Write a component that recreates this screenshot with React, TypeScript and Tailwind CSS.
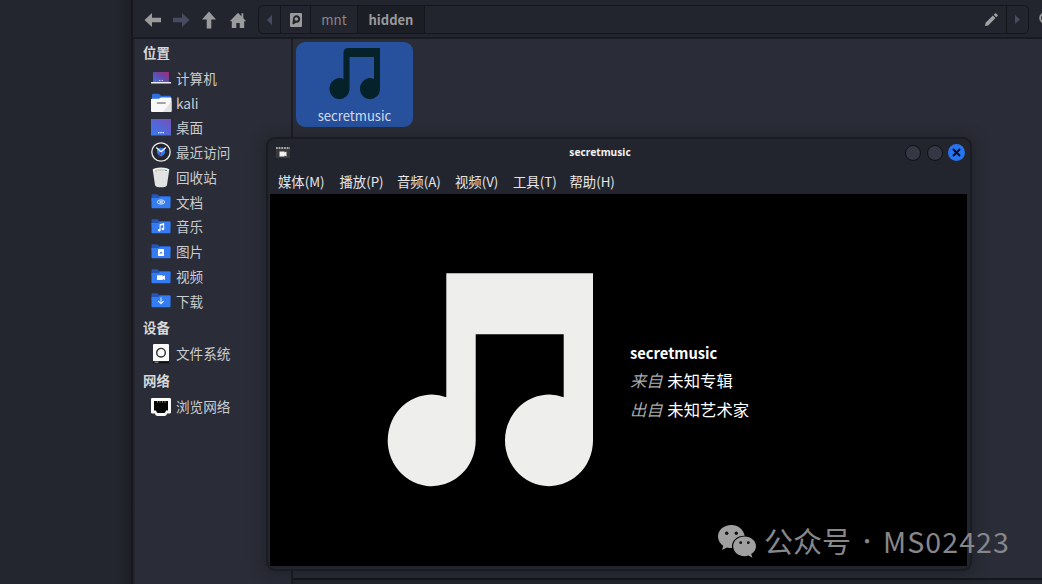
import type { ReactNode } from "react";

const folderGlyphs: Record<string, ReactNode> = {
  docs: (
    <g fill="none" stroke="#dbe7ff" strokeWidth="1">
      <ellipse cx="10" cy="9" rx="3.7" ry="2.1" />
      <ellipse cx="10.3" cy="9" rx="1.7" ry="0.8" />
    </g>
  ),
  music: (
    <path d="M8.6 6.2 13.2 5v6a1.4 1.2 0 1 1-1-1.1V7.1l-2.6.7v4.4a1.4 1.2 0 1 1-1-1.1z" fill="#fff" />
  ),
  pictures: (
    <>
      <rect x="7" y="6" width="6" height="7" rx="0.6" fill="#fff" />
      <path d="M8.3 10.6 10 8.6l1.7 2z" fill="#3579ef" />
    </>
  ),
  videos: <path d="M6 7.3h5.7v1.2L14 7.3v4.8l-2.3-1.2v1.2H6z" fill="#fff" />,
  downloads: (
    <path d="M10 5.5v6M7.3 9 10 11.7 12.7 9" fill="none" stroke="#dbe7ff" strokeWidth="1.1" />
  ),
};

const FolderIcon = ({ name }: { name: string }) => (
  <svg width="20" height="17" viewBox="0 0 20 17">
    <path d="M.5 2q0-.8.8-.8h5l2 1.8h10.2q1 0 1 1v4H.5z" fill="#2456b4" />
    <path d="M.5 5h7l1.5-1.2h10.5v10.4q0 1-1 1h-17q-1 0-1-1z" fill="#357cf2" />
    {folderGlyphs[name]}
  </svg>
);

const ComputerIcon = () => (
  <svg width="20" height="18" viewBox="0 0 20 18">
    <defs>
      <linearGradient id="laptop" x1="0" y1="1" x2="1" y2="0">
        <stop stopColor="#3974e8" />
        <stop offset=".55" stopColor="#6846a8" />
        <stop offset="1" stopColor="#a12b72" />
      </linearGradient>
    </defs>
    <path d="M2 3h16v10H2z" fill="url(#laptop)" />
    <path d="M8 11.5h1.3M10.6 11.5h1.3" stroke="#d6d3ee" />
    <path d="M0 13h20v1.5H0z" fill="#f0f0f0" />
  </svg>
);

const HomeFolderIcon = () => (
  <svg width="21" height="20" viewBox="0 0 21 20">
    <path d="M1 2q0-1.2 1-1.2h6l2 2h9q1 0 1 1V8H1z" fill="#2d6fe0" />
    <path d="M0 6.5q0-.7.8-.7h7L10 4.6h9.7q.8 0 .8.8V18q0 1-.8 1H1q-1 0-1-1z" fill="#f8f8f8" />
    <path d="M20.5 8v10q0 1-.8 1H12z" fill="#e2e2e2" />
    <path d="M6.5 10h7.5" stroke="#a3a3a3" strokeWidth="1.8" strokeLinecap="round" />
  </svg>
);

const DesktopIcon = () => (
  <svg width="20" height="17" viewBox="0 0 20 17">
    <defs>
      <linearGradient id="desk" x1="0" y1="1" x2="1" y2="0">
        <stop stopColor="#367af2" />
        <stop offset="1" stopColor="#7650b8" />
      </linearGradient>
    </defs>
    <path d="M0 0h20v16.5H0z" fill="url(#desk)" />
    <path d="M7 13.6h1.5M9.3 13.6h1.5M11.5 13.6H13" stroke="#dfe6ff" strokeWidth="1.2" />
  </svg>
);

const RecentIcon = () => (
  <svg width="20" height="20" viewBox="0 0 20 20">
    <circle cx="10" cy="10" r="9.2" fill="#23252e" stroke="#ededed" strokeWidth="1.3" />
    <path d="M10 5.5 14 6.7v4Q13 13.6 10 14.5 7 13.6 6 10.7v-4z" fill="#3478f4" />
    <path d="M5.3 5.5 10 9.8l4.8-4.3" fill="none" stroke="#f3f3f3" strokeWidth="1.4" />
    <path d="M10 10 7.5 15.5" stroke="#842d46" />
  </svg>
);

const TrashIcon = () => (
  <svg width="20" height="21" viewBox="0 0 20 21">
    <path d="M1.7 2.5 4 18q.3 2.3 6 2.3t6-2.3l2.3-15.5z" fill="#e3e3e3" />
    <ellipse cx="10" cy="2.8" rx="8.2" ry="2.3" fill="#f4f4f4" />
    <path d="M4 3q6-2.5 12 0-6 3-12 0z" fill="#cfd2cd" />
    <path d="M4 4h2" stroke="#dba244" strokeWidth="1.2" />
    <path d="M14 3.5h2" stroke="#45a198" strokeWidth="1.2" />
  </svg>
);

const DiskIcon = () => (
  <svg width="20" height="21" viewBox="0 0 20 21">
    <rect x="2" y="1" width="16" height="17.5" rx="1" fill="#fafafa" />
    <circle cx="10" cy="9.7" r="4.3" fill="#fafafa" stroke="#2c2c2c" strokeWidth="1.4" />
    <path d="M2 18.2h16v2H2z" fill="#0b0b0d" />
    <path d="M3.5 19.2h4" stroke="#a8a8a8" />
  </svg>
);

const NetworkIcon = () => (
  <svg width="20" height="20" viewBox="0 0 20 20">
    <path d="M1.2 1h17.6q1.2 0 1.2 1.2v13.3q0 1-1.2 1h-2.6q-.7 2.2-2.3 2.5H6.1q-1.6-.3-2.3-2.5H1.2q-1.2 0-1.2-1V2.2Q0 1 1.2 1z" fill="#fbfbfb" />
    <path d="M3 4h14v9.5h-2q-.5 2.5-2 2.5H7q-1.5 0-2-2.5H3z" fill="#050505" />
    <path d="M6.5 4v1.7M9 4v1.7M11.5 4v1.7M14 4v1.7" stroke="#95804d" strokeWidth=".9" />
  </svg>
);

const places = [
  { label: "计算机", icon: <ComputerIcon /> },
  { label: "kali", icon: <HomeFolderIcon /> },
  { label: "桌面", icon: <DesktopIcon /> },
  { label: "最近访问", icon: <RecentIcon /> },
  { label: "回收站", icon: <TrashIcon /> },
  { label: "文档", icon: <FolderIcon name="docs" /> },
  { label: "音乐", icon: <FolderIcon name="music" /> },
  { label: "图片", icon: <FolderIcon name="pictures" /> },
  { label: "视频", icon: <FolderIcon name="videos" /> },
  { label: "下载", icon: <FolderIcon name="downloads" /> },
];

const menus = [
  { label: "媒体(M)", width: "w-[61.5px]" },
  { label: "播放(P)", width: "w-[57.5px]" },
  { label: "音频(A)", width: "w-[58px]" },
  { label: "视频(V)", width: "w-[58px]" },
  { label: "工具(T)", width: "w-[56.5px]" },
  { label: "帮助(H)", width: "w-[60px]" },
];

const SectionTitle = ({ children }: { children: ReactNode }) => (
  <h2 className="flex h-[26.8px] items-center pl-[8px] text-[13.4px] font-bold text-[#d8d8da]">{children}</h2>
);

const PlaceRow = ({ label, icon, tall }: { label: string; icon: ReactNode; tall?: boolean }) => (
  <div className={tall ? "flex h-[26.5px] items-center pl-[16px]" : "flex h-[24.75px] items-center pl-[16px]"}>
    <span className="flex w-[25px] shrink-0 items-center">{icon}</span>
    <span className="text-[13.6px] text-[#cbccd0]">{label}</span>
  </div>
);

const Toolbar = () => (
  <header className="flex h-[39px] shrink-0 items-center border-b-2 border-[#191b22] bg-[#23252e] pt-[2px]">
    <div className="flex w-[125px] shrink-0 items-center gap-[8px] pl-[10px]">
      <svg width="20" height="20" viewBox="0 0 20 20">
        <path d="M1.5 10 9 3v4.7h9v4.6H9V17z" fill="#9a9b9d" />
      </svg>
      <svg width="20" height="20" viewBox="0 0 20 20">
        <path d="M18.5 10 11 3v4.7H2v4.6h9V17z" fill="#474b60" />
      </svg>
      <svg width="20" height="20" viewBox="0 0 20 20">
        <path d="M10 1.5 3 9.5h4.7v9h4.6v-9H17z" fill="#9a9b9d" />
      </svg>
      <svg className="ml-px" width="20" height="20" viewBox="0 0 20 20">
        <path d="M1.8 11.3 10 2.8l3.5 3.7V3.3h1.8v5l2.900 3h-2V18h-4.500v-5H8.300v5H3.800v-6.700z" fill="#9a9b9d" />
      </svg>
    </div>
    <div className="flex h-[29px] w-[771px] shrink-0 overflow-hidden rounded-[5px] border border-[#14161b] bg-[#23252e] text-[13.33px]">
      <div className="flex w-[22px] items-center justify-center border-r border-[#14161b]">
        <svg width="5" height="10" viewBox="0 0 5 10"><path d="M5 0v10L0 5z" fill="#474b60" /></svg>
      </div>
      <div className="flex w-[30px] items-center justify-center border-r border-[#14161b]">
        <svg width="12" height="14" viewBox="0 0 12 14">
          <rect width="12" height="14" rx="1" fill="#9a9b9d" />
          <path d="M2.3 10.5 3 7A3.7 3.7 0 1 1 6 9.7L3.5 11.5z" fill="#23252e" />
          <circle cx="6.4" cy="6" r="1.8" fill="#9a9b9d" />
        </svg>
      </div>
      <div className="flex w-[47px] items-center justify-center border-r border-[#14161b] text-[#86878b]">mnt</div>
      <div className="flex w-[67px] items-center justify-center border-r border-[#14161b] bg-[#1c1e25] text-[13px] font-bold text-[#999a9d]">hidden</div>
      <div className="flex flex-1 items-center justify-end pr-[8px]">
        <svg width="14" height="14" viewBox="0 0 14 14">
          <path d="m1 13 .6-3.2 7.3-7.3 2.6 2.6-7.3 7.3zM9.7 1.7 11 .5q.6-.5 1.2 0l1.3 1.3q.5.6 0 1.2l-1.2 1.3z" fill="#a0a1a2" />
        </svg>
      </div>
      <div className="flex w-[22px] items-center justify-center border-l border-[#14161b]">
        <svg width="5" height="9" viewBox="0 0 5 9"><path d="M0 0v9l5-4.5z" fill="#474b60" /></svg>
      </div>
    </div>
    <svg className="ml-[9px] shrink-0" width="20" height="20" viewBox="0 0 20 20">
      <circle cx="7" cy="8" r="4.8" fill="none" stroke="#9a9b9d" strokeWidth="2" />
      <path d="m11 12 6 6" stroke="#9a9b9d" strokeWidth="2" />
    </svg>
  </header>
);

const PlayerWindow = () => (
  <section className="absolute left-[266px] top-[137px] flex h-[434px] w-[706px] flex-col rounded-[9px] border-2 border-[#1a1c22] bg-[#23252e] px-[2px] shadow-[0_2px_16px_4px_rgba(0,0,0,0.2)]">
    <div className="flex h-[27px] shrink-0 items-center">
      <div className="w-[52px] pl-[6px]">
        <svg width="14" height="12" viewBox="0 0 14 12">
          <rect width="14" height="11" fill="#393939" />
          <path d="M0 1h14" stroke="#d0d0d0" strokeWidth="1.5" strokeDasharray="1.7 1" />
          <path d="M3.5 4.5h5v1l2-1v5l-2-1v1h-5z" fill="#f2f2f2" />
        </svg>
      </div>
      <h1 className="flex-1 pr-[27px] pt-px text-center font-['Noto_Sans',sans-serif] text-[10.2px] font-bold text-[#f0f0f0]">secretmusic</h1>
      <div className="flex w-[63px] items-center gap-[6px]">
        <span className="h-4 w-4 rounded-full border border-[#101116] bg-[#353844]" />
        <span className="h-4 w-4 rounded-full border border-[#101116] bg-[#353844]" />
        <span className="-ml-px flex h-[17px] w-[17px] items-center justify-center rounded-full bg-[#2874f0]">
          <svg width="9" height="9" viewBox="0 0 9 9"><path d="m1 1 7 7M8 1 1 8" stroke="#080c16" strokeWidth="2" /></svg>
        </span>
      </div>
    </div>
    <nav className="flex h-[28px] shrink-0 items-center pl-[8px] pt-[3px] text-[13.33px] text-[#e6e6e6]">
      {menus.map((menu) => (
        <span key={menu.label} className={menu.width}>{menu.label}</span>
      ))}
    </nav>
    <div className="mb-[3px] mr-[1px] flex flex-1 items-start bg-black">
      <svg className="ml-[117px] mt-[78px] shrink-0" width="207" height="215" viewBox="0 0 207 215">
        <path d="M59.3 1.3H206V168.5a44 45.8 0 1 1-29.3-43.3V62.3H88.7V168.5a44 45.8 0 1 1-29.4-43.3z" fill="#eeeeec" />
      </svg>
      <div className="ml-[36px] mt-[145px] text-[16.35px] leading-[28.3px] text-white">
        <p className="text-[14.7px] font-bold">secretmusic</p>
        <p className="-mt-px"><i className="mr-px text-[#aaa]">来自</i> 未知专辑</p>
        <p><i className="mr-px text-[#aaa]">出自</i> 未知艺术家</p>
      </div>
    </div>
  </section>
);

const Watermark = () => (
  <div className="absolute left-[717px] top-[519px] flex h-[44px] items-center text-[#87878a]">
    <svg width="40" height="34" viewBox="0 0 40 34">
      <path d="M14.5 1C6.7 1 1 6 1 12.6c0 3.8 2 7.1 5.3 9.3L5 25.9l5-2.5c1.5.5 3 .7 5 .7C14 16 21 11.4 27.7 11.7 26.5 5.6 21.2 1 14.5 1z" fill="#a0a0a0" />
      <path d="M27.5 12.5c-6.6 0-11.3 4.5-11.3 9.8s4.7 9.9 11.3 9.9c1.4 0 2.7-.2 3.9-.6l4 2.1-1.2-3.6c2.9-1.8 4.8-4.6 4.8-7.8 0-5.3-4.9-9.8-11.5-9.8z" fill="#a0a0a0" />
      <g fill="#101010">
        <circle cx="9.7" cy="9.3" r="1.7" /><circle cx="19.3" cy="9.3" r="1.7" />
        <circle cx="23.7" cy="18.7" r="1.4" /><circle cx="31.3" cy="18.7" r="1.4" />
      </g>
    </svg>
    <span className="ml-[7px] whitespace-pre text-[29px]">公众号</span>
    <span className="w-[32px] text-center text-[20px]">·</span>
    <span className="text-[28.5px] tracking-[1.1px]">MS02423</span>
  </div>
);

export default function App() {
  return (
    <div className="relative flex h-[584px] w-[1042px] overflow-hidden bg-[#23262f] font-['Noto_Sans_CJK_SC',sans-serif]">
      <div className="w-[131px] shrink-0 bg-linear-to-r from-[#23262f] from-90% to-[#1d1f25]" />
      <div className="flex w-[911px] flex-col border-l-2 border-[#15171c]">
        <Toolbar />
        <div className="flex h-[545px]">
          <aside className="w-[160px] shrink-0 border-l-2 border-r-2 border-l-[#23252e] border-r-[#1b1d24] bg-[#2a2c37]">
            <SectionTitle>位置</SectionTitle>
            {places.map((place) => <PlaceRow key={place.label} {...place} />)}
            <SectionTitle>设备</SectionTitle>
            <PlaceRow label="文件系统" icon={<DiskIcon />} tall />
            <SectionTitle>网络</SectionTitle>
            <PlaceRow label="浏览网络" icon={<NetworkIcon />} tall />
          </aside>
          <main className="flex flex-1 flex-col bg-[#2a2c37]">
            <div className="ml-[3px] mt-[3px] flex h-[85px] w-[117px] flex-col items-center rounded-[9px] bg-[#27519d] text-[13.1px] text-[#d3dcec]">
              <svg className="mt-[5px] shrink-0" width="52" height="54" viewBox="0 0 52 54">
                <path d="M14.5 6q0-5 5-5H51v40.5A10 10.5 0 1 1 45 32V10H20.5v31.5A10 10.5 0 1 1 14.5 32z" fill="#052129" />
              </svg>
              <span className="mt-[5px] leading-5">secretmusic</span>
            </div>
            <footer className="mt-auto h-[6px] border-t-2 border-[#15171c] bg-[#23252e]" />
          </main>
        </div>
      </div>
      <PlayerWindow />
      <Watermark />
    </div>
  );
}
